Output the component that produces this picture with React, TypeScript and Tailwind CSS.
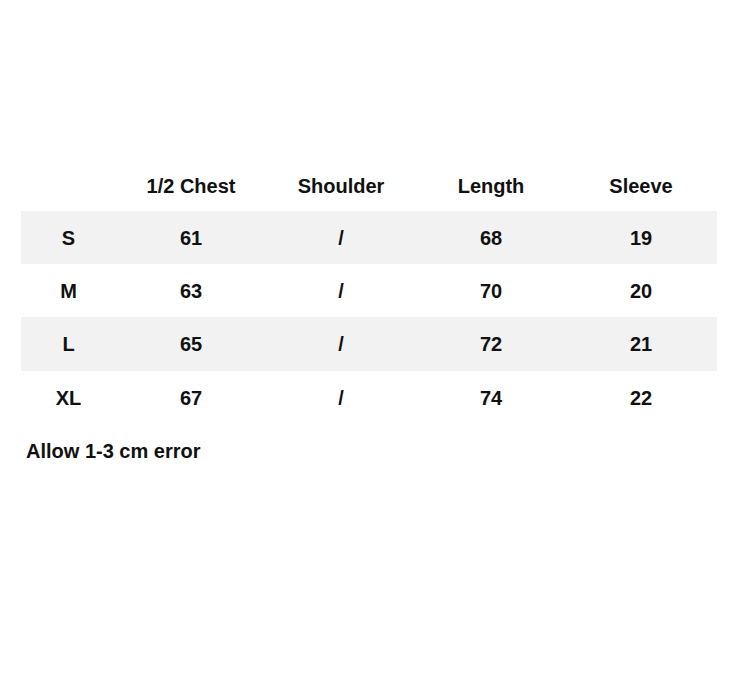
const headers = ["", "1/2 Chest", "Shoulder", "Length", "Sleeve"];

const rows = [
  ["S", "61", "/", "68", "19"],
  ["M", "63", "/", "70", "20"],
  ["L", "65", "/", "72", "21"],
  ["XL", "67", "/", "74", "22"],
];

export default function App() {
  return (
    <div className="h-[674px] w-[738px] bg-white font-['Liberation_Sans',sans-serif] text-[20px] font-bold text-[#111]">
      <div className="px-[21px] pt-[170px]">
        <div className="grid h-[34px] grid-cols-[95px_150px_150px_150px_150px] items-start">
          {headers.map((h, i) => (
            <div key={i} className="text-center leading-[32px]">
              {h}
            </div>
          ))}
        </div>
        <div className="mt-[7px]">
          {rows.map((row, r) => (
            <div
              key={row[0]}
              className={`grid h-[53.2px] grid-cols-[95px_150px_150px_150px_150px] items-center pt-[1px] ${r % 2 === 0 ? "bg-[#f2f2f2]" : ""}`}
            >
              {row.map((cell, i) => (
                <div key={i} className="text-center">
                  {cell}
                </div>
              ))}
            </div>
          ))}
        </div>
        <p className="mt-[12px] pl-[5px]">Allow 1-3 cm error</p>
      </div>
    </div>
  );
}
